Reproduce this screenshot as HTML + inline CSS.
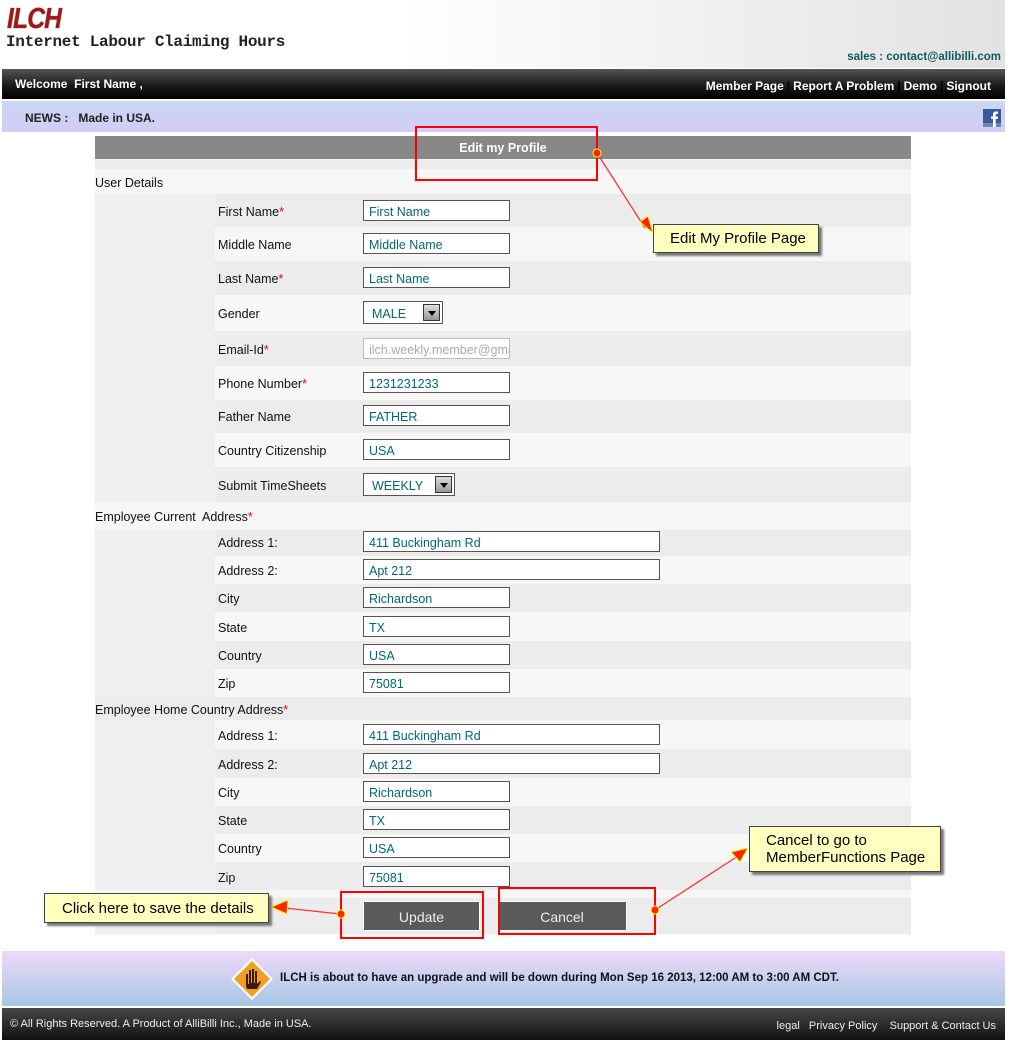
<!DOCTYPE html>
<html><head><meta charset="utf-8">
<style>
*{margin:0;padding:0;box-sizing:border-box}
body{width:1013px;height:1040px;position:relative;overflow:hidden;background:#fff;font-family:"Liberation Sans",sans-serif;font-size:12.5px;color:#111}
.a{position:absolute}
.hdr{left:0;top:0;width:1005px;height:68px;background:linear-gradient(90deg,#fff 40%,#e2e2e2)}
.nav{left:2px;top:69px;width:1003px;height:30px;background:linear-gradient(#555,#1a1a1a 55%,#000);color:#fff;font-weight:bold;font-size:12px}
.news{left:2px;top:101px;width:1003px;height:31px;background:linear-gradient(#c9d6f3,#d3ccf7);font-weight:bold;font-size:12px}
.bg{left:95px;top:159px;width:816px;height:776px;background:#f6f6f6}
.r{position:absolute;left:95px;width:816px}
.g{background:#ececec}
.l{background:#f7f7f7}
.lc{position:absolute;left:95px;width:120px;background:#efefef}
.lab{position:absolute;left:218px}
.inp{position:absolute;left:363px;width:147px;height:21px;border:1px solid #555;background:#fff;color:#006874;padding:4px 0 0 5px;font-size:12.5px;white-space:nowrap;overflow:hidden}
.w{width:297px}
.st{color:#e00}
.sel{position:absolute;left:363px;height:23px;border:1px solid #555;background:#fff;color:#006874;padding:5px 0 0 8px}
.sel i{position:absolute;right:2px;top:2px;width:17px;height:17px;border:1px solid #333;background:linear-gradient(#ddd,#999)}
.sel i:after{content:"";position:absolute;left:4px;top:6px;border-left:4px solid transparent;border-right:4px solid transparent;border-top:5px solid #000}
.btn{position:absolute;top:901px;height:30px;background:#5a5a5a;color:#eee;text-align:center;line-height:30px;font-size:14px;border:1px solid #fff}
.red{position:absolute;border:2px solid #f00}
.call{position:absolute;background:#ffffc0;border:1px solid #444;box-shadow:3px 3px 2px #777;font-size:15px;color:#000}
.sep{color:#000;margin:0 3px}
</style></head><body>
<div class="a hdr"></div>
<div class="a" style="left:7px;top:4px;font:italic bold 29px 'Liberation Sans',sans-serif;color:#a01818;letter-spacing:-1px;line-height:30px;transform:scaleX(0.85);transform-origin:left;text-shadow:0 0 1px #400">ILCH</div>
<div class="a" style="left:6px;top:33px;font:bold 16px 'Liberation Mono',monospace;color:#222;letter-spacing:-0.3px">Internet Labour Claiming Hours</div>
<div class="a" style="right:12px;top:51px;font-weight:bold;font-size:11.5px;color:#0d5a5a">sales : contact@allibilli.com</div>
<div class="a nav"><span class="a" style="left:13px;top:8px">Welcome&nbsp; First Name ,</span>
<span class="a" style="right:14px;top:10px;white-space:nowrap">Member Page<span class="sep">|</span>Report A Problem<span class="sep">|</span>Demo<span class="sep">|</span>Signout</span></div>
<div class="a news"><span class="a" style="left:23px;top:10px;color:#222">NEWS :&nbsp;&nbsp; Made in USA.</span>
<svg class="a" style="left:981px;top:8px" width="18" height="18"><rect width="18" height="18" fill="#3b5998"/><rect y="14" width="18" height="4" fill="#6d84b4"/><path d="M10 18V10H8V7.5h2V5.5c0-2 1-3 3-3h2v2.5h-1.5c-.6 0-.8.3-.8.8V7.5h2.3L14.7 10H12.7v8z" fill="#fff"/></svg></div>
<div class="a" style="left:95px;top:136px;width:816px;height:23px;background:#888;color:#fff;font-weight:bold;font-size:12.5px;text-align:center;line-height:25px">Edit my Profile</div>
<div class="a bg"></div>
<div class="r g" style="top:160px;height:9px"></div>
<div class="a" style="left:95px;top:176px">User Details</div>
<div class="r g" style="top:194px;height:33px"></div>
<div class="r l" style="top:227px;height:34px"></div>
<div class="r g" style="top:261px;height:34px"></div>
<div class="r l" style="top:295px;height:36px"></div>
<div class="r g" style="top:331px;height:35px"></div>
<div class="r l" style="top:366px;height:34px"></div>
<div class="r g" style="top:400px;height:33px"></div>
<div class="r l" style="top:433px;height:34px"></div>
<div class="r g" style="top:467px;height:35px"></div>
<div class="lc" style="top:194px;height:308px"></div>
<div class="r g" style="top:530px;height:26px"></div>
<div class="r l" style="top:556px;height:28px"></div>
<div class="r g" style="top:584px;height:28px"></div>
<div class="r l" style="top:612px;height:29px"></div>
<div class="r g" style="top:641px;height:28px"></div>
<div class="r l" style="top:669px;height:28px"></div>
<div class="lc" style="top:530px;height:167px"></div>
<div class="r g" style="top:697px;height:23px"></div>
<div class="r l" style="top:720px;height:29px"></div>
<div class="r g" style="top:749px;height:29px"></div>
<div class="r l" style="top:778px;height:28px"></div>
<div class="r g" style="top:806px;height:28px"></div>
<div class="r l" style="top:834px;height:28px"></div>
<div class="r g" style="top:862px;height:28px"></div>
<div class="lc" style="top:720px;height:170px"></div>
<div class="r g" style="top:898px;height:36px"></div>
<div class="lc" style="top:898px;height:36px"></div>

<div class="lab" style="top:205px">First Name<span class="st">*</span></div><div class="inp" style="top:200px">First Name</div>
<div class="lab" style="top:238px">Middle Name</div><div class="inp" style="top:233px">Middle Name</div>
<div class="lab" style="top:272px">Last Name<span class="st">*</span></div><div class="inp" style="top:267px">Last Name</div>
<div class="lab" style="top:307px">Gender</div><div class="sel" style="top:301px;width:80px">MALE<i></i></div>
<div class="lab" style="top:343px">Email-Id<span class="st">*</span></div><div class="inp" style="top:338px;color:#aaa;border-color:#bbb">ilch.weekly.member@gmail.com</div>
<div class="lab" style="top:377px">Phone Number<span class="st">*</span></div><div class="inp" style="top:372px">1231231233</div>
<div class="lab" style="top:410px">Father Name</div><div class="inp" style="top:405px">FATHER</div>
<div class="lab" style="top:444px">Country Citizenship</div><div class="inp" style="top:439px">USA</div>
<div class="lab" style="top:479px">Submit TimeSheets</div><div class="sel" style="top:473px;width:92px">WEEKLY<i></i></div>

<div class="a" style="left:95px;top:510px">Employee Current&nbsp; Address<span class="st">*</span></div>
<div class="lab" style="top:536px">Address 1:</div><div class="inp w" style="top:531px">411 Buckingham Rd</div>
<div class="lab" style="top:564px">Address 2:</div><div class="inp w" style="top:559px">Apt 212</div>
<div class="lab" style="top:592px">City</div><div class="inp" style="top:587px">Richardson</div>
<div class="lab" style="top:621px">State</div><div class="inp" style="top:616px">TX</div>
<div class="lab" style="top:649px">Country</div><div class="inp" style="top:644px">USA</div>
<div class="lab" style="top:677px">Zip</div><div class="inp" style="top:672px">75081</div>
<div class="a" style="left:95px;top:703px">Employee Home Country Address<span class="st">*</span></div>
<div class="lab" style="top:729px">Address 1:</div><div class="inp w" style="top:724px">411 Buckingham Rd</div>
<div class="lab" style="top:758px">Address 2:</div><div class="inp w" style="top:753px">Apt 212</div>
<div class="lab" style="top:786px">City</div><div class="inp" style="top:781px">Richardson</div>
<div class="lab" style="top:814px">State</div><div class="inp" style="top:809px">TX</div>
<div class="lab" style="top:842px">Country</div><div class="inp" style="top:837px">USA</div>
<div class="lab" style="top:871px">Zip</div><div class="inp" style="top:866px">75081</div>

<div class="btn" style="left:363px;width:117px">Update</div>
<div class="btn" style="left:497px;width:130px">Cancel</div>

<div class="red" style="left:415px;top:126px;width:183px;height:55px"></div>
<div class="red" style="left:340px;top:891px;width:144px;height:48px"></div>
<div class="red" style="left:498px;top:887px;width:158px;height:48px"></div>

<svg class="a" style="left:0;top:0" width="1013" height="1040">
<g stroke="#f33" stroke-width="1.3" fill="none">
<line x1="597" y1="153" x2="645" y2="228"/>
<line x1="340" y1="914" x2="285" y2="908"/>
<line x1="655" y1="910" x2="738" y2="856"/>
</g>
<g fill="#f20" stroke="#ff0" stroke-width="1">
<path d="M653 233 L640 222 L648 216 Z"/>
<path d="M271 907 L288 900 L287 914 Z"/>
<path d="M748 848 L740 862 L731 852 Z"/>
<circle cx="597" cy="153" r="4"/><circle cx="341" cy="914" r="4"/><circle cx="655" cy="910" r="4"/>
</g></svg>
<div class="call" style="left:653px;top:224px;width:166px;height:29px;padding:5px 0 0 16px">Edit My Profile Page</div>
<div class="call" style="left:44px;top:893px;width:225px;height:30px;padding:6px 0 0 17px">Click here to save the details</div>
<div class="call" style="left:749px;top:826px;width:192px;height:46px;padding:5px 0 0 16px;line-height:17px">Cancel to go to<br>MemberFunctions Page</div>

<div class="a" style="left:2px;top:951px;width:1003px;height:55px;background:linear-gradient(#f0d8f8,#a6c8e6)"></div>
<svg class="a" style="left:229px;top:956px" width="46" height="46"><path d="M23 2 L44 23 L23 44 L2 23 Z" fill="#fff"/><path d="M23 5 L41 23 L23 41 L5 23 Z" fill="#f0a020"/><path d="M17 30 V18 h2 V28 h1 V14 h2 V27 h1 V13 h2 V27 h1 V15 h2 V28 l3 -3 l1 1 l-4 7 h-10 z" fill="#3a1a08"/></svg>
<div class="a" style="left:280px;top:972px;font-weight:bold;font-size:11.5px;color:#111">ILCH is about to have an upgrade and will be down during Mon Sep 16 2013, 12:00 AM to 3:00 AM CDT.</div>
<div class="a" style="left:2px;top:1008px;width:1003px;height:32px;background:linear-gradient(#484848,#111)"></div>
<div class="a" style="left:10px;top:1018px;color:#eee;font-size:11px">© All Rights Reserved. A Product of AlliBilli Inc., Made in USA.</div>
<div class="a" style="right:17px;top:1020px;color:#eee;font-size:11px;word-spacing:0">legal&nbsp;&nbsp; Privacy Policy&nbsp;&nbsp;&nbsp; Support &amp; Contact Us</div>
</body></html>
